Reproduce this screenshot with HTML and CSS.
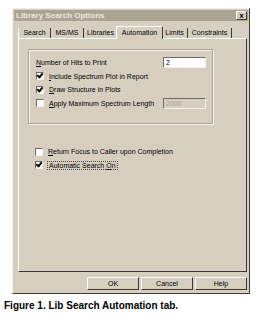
FILE: index.html
```html
<!DOCTYPE html>
<html lang="en">

<head>
    <meta charset="UTF-8">
    <meta name="viewport" content="width=device-width, initial-scale=1.0">
    <title>Library Search Options</title>
    <link rel="stylesheet" href="styles.css">
</head>

<body>
    <div class="dialog">
        <div class="titlebar">
            <span class="title">Library Search Options</span>
            <span class="close">x</span>
        </div>
        <div class="tabs">
            <span class="tab t-search">Search</span>
            <span class="tab t-msms">MS/MS</span>
            <span class="tab t-libs">Libraries</span>
            <span class="tab t-auto active">Automation</span>
            <span class="tab t-limits">Limits</span>
            <span class="tab t-cons">Constraints</span>
        </div>
        <div class="panel">
            <div class="group">
                <div class="row">
                    <span class="label"><u>N</u>umber of Hits to Print</span>
                    <span class="field">2</span>
                </div>
                <div class="row">
                    <span class="check on"></span>
                    <span><u>I</u>nclude Spectrum Plot in Report</span>
                </div>
                <div class="row">
                    <span class="check on"></span>
                    <span><u>D</u>raw Structure in Plots</span>
                </div>
                <div class="row">
                    <span class="check"></span>
                    <span class="label"><u>A</u>pply Maximum Spectrum Length</span>
                    <span class="field disabled">2000</span>
                </div>
            </div>
            <div class="options">
                <div class="row">
                    <span class="check"></span>
                    <span><u>R</u>eturn Focus to Caller upon Completion</span>
                </div>
                <div class="row">
                    <span class="check on"></span>
                    <span class="focus">Automatic Search <u>O</u>n</span>
                </div>
            </div>
        </div>
        <div class="buttons">
            <span class="btn">OK</span>
            <span class="btn">Cancel</span>
            <span class="btn">Help</span>
        </div>
    </div>
    <div class="caption">Figure 1. Lib Search Automation tab.</div>
</body>

</html>
```

FILE: styles.css
```css
body {
    margin: 0;
    padding: 0;
    background: #fff;
    font-family: "Liberation Sans", Arial, sans-serif;
    font-size: 7px;
    color: #000;
}

.dialog {
    box-sizing: border-box;
    width: 238px;
    height: 286px;
    margin: 8px 0 0 12px;
    padding: 1px;
    background: #d6cfbf;
    border: 1px solid;
    border-color: #f2eee6 #3c3a36 #3c3a36 #f2eee6;
}

.titlebar {
    display: flex;
    align-items: center;
    justify-content: space-between;
    height: 11px;
    padding: 0 1px 0 2px;
    background: #aba494;
}

.title {
    color: #ebe7de;
    font-weight: bold;
    font-size: 8px;
}

.close {
    box-sizing: border-box;
    width: 11px;
    height: 9px;
    line-height: 7px;
    text-align: center;
    font-weight: bold;
    font-size: 8px;
    background: #d6cfbf;
    border: 1px solid;
    border-color: #fff #3c3a36 #3c3a36 #fff;
}

.tabs {
    display: flex;
    align-items: flex-end;
    height: 13px;
    margin: 4px 0 0 4px;
}

.tab {
    box-sizing: border-box;
    height: 10px;
    line-height: 9px;
    text-align: center;
    border-right: 1px solid #3c3a36;
    white-space: nowrap;
}

.t-search { width: 33px; border-left: 1px solid #fff; }
.t-msms { width: 33px; }
.t-libs { width: 34px; }
.t-auto { width: 45px; }
.t-limits { width: 26px; }
.t-cons { width: 44px; }

.tab.active {
    position: relative;
    height: 13px;
    margin: 0 -1px -1px -2px;
    width: 47px;
    line-height: 11px;
    background: #d6cfbf;
    border-top: 1px solid #fff;
    border-left: 1px solid #fff;
    z-index: 1;
}

.panel {
    box-sizing: border-box;
    width: 229px;
    height: 234px;
    margin-left: 4px;
    padding: 10px 0 0 9px;
    border: 1px solid;
    border-color: #fff #3c3a36 #3c3a36 #fff;
}

.group {
    box-sizing: border-box;
    width: 185px;
    height: 75px;
    padding: 6px 6px 0 7px;
    border: 1px solid #aba595;
    box-shadow: 1px 1px 0 #f4f1ea, inset 1px 1px 0 #f4f1ea;
}

.row {
    display: flex;
    align-items: center;
    height: 13.5px;
    white-space: nowrap;
}

.label {
    flex: 1;
}

.field {
    box-sizing: border-box;
    width: 43px;
    height: 11px;
    line-height: 9px;
    padding-left: 2px;
    background: #fff;
    border: 1px solid;
    border-color: #6e6a62 #f4f1ea #f4f1ea #6e6a62;
}

.field.disabled {
    background: #d6cfbf;
    color: #aaa496;
}

.check {
    box-sizing: border-box;
    flex: none;
    width: 8px;
    height: 8px;
    margin-right: 5px;
    background: #fff;
    border: 1px solid;
    border-color: #6e6a62 #f4f1ea #f4f1ea #6e6a62;
    position: relative;
}

.check.on::after {
    content: "";
    position: absolute;
    left: 1px;
    top: -1px;
    width: 2px;
    height: 4px;
    border: solid #000;
    border-width: 0 2px 2px 0;
    transform: rotate(40deg);
}

.options {
    margin: 21px 0 0 7px;
}

.focus {
    padding: 0 1px;
    outline: 1px dotted #444;
}

.buttons {
    display: flex;
    justify-content: flex-end;
    gap: 2px;
    margin: 5px 1px 0 0;
}

.btn {
    box-sizing: border-box;
    width: 52px;
    height: 13px;
    line-height: 11px;
    text-align: center;
    border: 1px solid;
    border-color: #fff #3c3a36 #3c3a36 #fff;
}

.caption {
    margin: 6px 0 0 4px;
    font-weight: bold;
    font-size: 10px;
}
```
